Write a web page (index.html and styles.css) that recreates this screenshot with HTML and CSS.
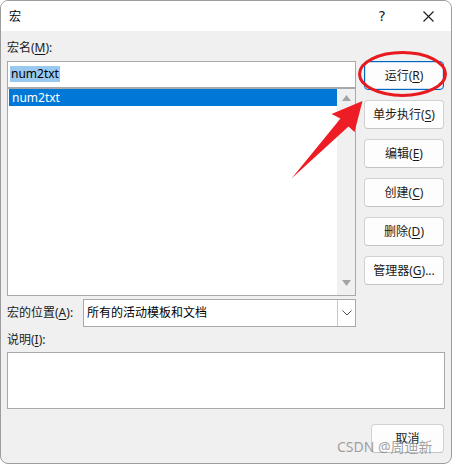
FILE: index.html
```html
<!DOCTYPE html>
<html lang="zh-CN">
<head>
<meta charset="utf-8">
<title>宏</title>
<link rel="stylesheet" href="styles.css">
</head>
<body>
<div class="win">
  <div class="titlebar">
    <span class="title">宏</span>
    <span class="tbtn help">?</span>
    <span class="tbtn close">
      <svg width="11" height="11" viewBox="0 0 11 11"><path d="M0.5 0.5 L10.5 10.5 M10.5 0.5 L0.5 10.5" stroke="#1b1b1b" stroke-width="1.1" fill="none"/></svg>
    </span>
  </div>
  <div class="content">
    <div class="top">
      <div class="leftcol">
        <div class="label first">宏名(<u>M</u>):</div>
        <div class="namebox"><span class="sel">num2txt</span></div>
        <div class="list">
          <div class="items"><div class="item selected">num2txt</div></div>
          <div class="scroll">
            <svg width="9" height="6" viewBox="0 0 9 6"><path d="M4.5 0 L9 6 L0 6 Z" fill="#a3a3a3"/></svg>
            <svg width="9" height="6" viewBox="0 0 9 6"><path d="M0 0 L9 0 L4.5 6 Z" fill="#a3a3a3"/></svg>
          </div>
        </div>
      </div>
      <div class="rightcol">
        <button class="btn default">运行(<u>R</u>)</button>
        <button class="btn">单步执行(<u>S</u>)</button>
        <button class="btn">编辑(<u>E</u>)</button>
        <button class="btn">创建(<u>C</u>)</button>
        <button class="btn">删除(<u>D</u>)</button>
        <button class="btn">管理器(<u>G</u>)...</button>
      </div>
    </div>
    <div class="locrow">
      <span class="label loclabel">宏的位置(<u>A</u>):</span>
      <div class="combo">
        <span class="combotext">所有的活动模板和文档</span>
        <span class="drop"><svg width="10" height="6" viewBox="0 0 10 6"><path d="M0.5 0.5 L5 5 L9.5 0.5" stroke="#555" stroke-width="1" fill="none"/></svg></span>
      </div>
    </div>
    <div class="label desclabel">说明(<u>I</u>):</div>
    <div class="desc"></div>
    <div class="footer"><button class="btn cancel">取消</button></div>
  </div>
  <svg class="annot" width="452" height="464" viewBox="0 0 452 464">
    <ellipse cx="402.5" cy="74" rx="43" ry="21.5" fill="none" stroke="#e8191f" stroke-width="3"/>
    <path d="M362.5 101 L331.5 114 L340.5 118.5 L291.5 178.5 L348.5 126.5 L354.5 132 Z" fill="#ee1c25"/>
  </svg>
  <div class="watermark">CSDN @周迪新</div>
</div>
</body>
</html>
```
FILE: styles.css
```css
* { box-sizing: border-box; }
html, body { margin: 0; padding: 0; background: #ffffff; }
body {
  font-family: "Noto Sans", "Noto Sans CJK SC", sans-serif;
  font-size: 12px;
  color: #1a1a1a;
}
.win {
  position: relative;
  width: 452px;
  height: 464px;
  border: 1px solid #9c9c9c;
  border-radius: 8px;
  background: #f0f0f0;
  overflow: hidden;
}
.titlebar {
  height: 30px;
  background: #ffffff;
  display: flex;
  align-items: center;
}
.title {
  flex: 1;
  padding-left: 8px;
  font-family: "Noto Sans CJK SC", sans-serif;
  font-size: 12px;
  line-height: 16px;
  color: #000;
}
.tbtn {
  width: 46px;
  height: 30px;
  display: flex;
  align-items: center;
  justify-content: center;
  color: #1b1b1b;
}
.help {
  font-family: "DejaVu Sans", sans-serif;
  font-size: 14px;
  padding-bottom: 1px;
}
.close svg { display: block; }
.content {
  padding: 0 7px 0 6px;
}
.top {
  display: flex;
  gap: 8px;
}
.leftcol {
  width: 349px;
  padding-top: 9px;
}
.label {
  line-height: 16px;
  height: 16px;
  white-space: nowrap;
  color: #1a1a1a;
}
.label u { text-underline-offset: 2px; }
.namebox {
  margin-top: 5px;
  height: 27px;
  border: 1px solid #a9a9a9;
  background: #fff;
  padding: 3px 0 0 2px;
}
.sel {
  display: inline-block;
  height: 16px;
  line-height: 16px;
  background: #99c9ef;
  color: #000;
  padding: 0 1px;
}
.list {
  height: 208px;
  border: 1px solid #a9a9a9;
  background: #fff;
  display: flex;
}
.items {
  flex: 1;
  padding: 0 0 0 1px;
}
.item {
  height: 17px;
  line-height: 17px;
  padding-left: 3px;
}
.item.selected {
  background: #0078d7;
  color: #fff;
}
.scroll {
  width: 18px;
  background: #f0f0f0;
  display: flex;
  flex-direction: column;
  justify-content: space-between;
  align-items: center;
  padding: 6px 0 9px;
}
.scroll svg { display: block; }
.rightcol {
  width: 80px;
  padding-top: 30px;
  display: flex;
  flex-direction: column;
  gap: 10px;
}
.btn {
  height: 29px;
  width: 80px;
  border: 1px solid #d2d2d2;
  border-bottom-color: #c4c4c4;
  border-radius: 4px;
  background: #fdfdfd;
  font-family: "Noto Sans", "Noto Sans CJK SC", sans-serif;
  font-size: 12px;
  color: #1a1a1a;
  padding: 0;
  line-height: 16px;
  white-space: nowrap;
}
.btn u { text-underline-offset: 2px; }
.btn.default {
  border: 1px solid #0067c0;
  box-shadow: inset 0 0 0 1px #cfe1f3;
}
.locrow {
  margin-top: 3px;
  display: flex;
  align-items: center;
}
.loclabel {
  width: 76px;
}
.combo {
  width: 273px;
  height: 28px;
  border: 1px solid #a9a9a9;
  background: #fff;
  display: flex;
  align-items: center;
}
.combotext {
  flex: 1;
  padding-left: 3px;
  line-height: 16px;
  color: #000;
}
.drop {
  width: 18px;
  height: 26px;
  border-left: 1px solid #c8c8c8;
  display: flex;
  align-items: center;
  justify-content: center;
}
.drop svg { display: block; }
.desclabel {
  margin-top: 5px;
}
.desc {
  margin-top: 4px;
  width: 438px;
  height: 57px;
  border: 1px solid #a9a9a9;
  background: #fff;
}
.footer {
  margin-top: 15px;
  display: flex;
  justify-content: flex-end;
}
.btn.cancel {
  width: 73px;
}
.annot {
  position: absolute;
  left: -1px;
  top: -1px;
  pointer-events: none;
}
.watermark {
  position: absolute;
  left: 336px;
  top: 437px;
  font-family: "Noto Sans", "Noto Sans CJK SC", sans-serif;
  font-size: 14px;
  line-height: 18px;
  color: rgba(130, 130, 130, 0.75);
  white-space: nowrap;
  pointer-events: none;
}
```
